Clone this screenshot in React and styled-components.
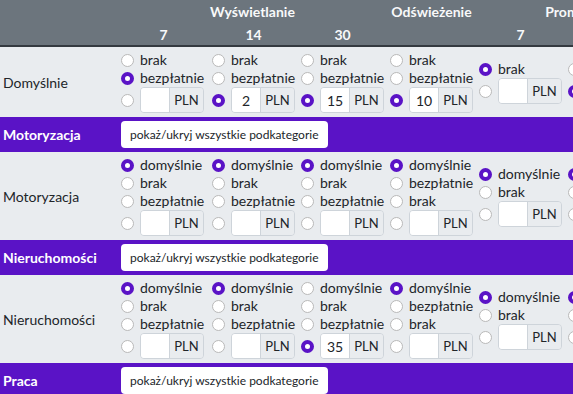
import styled, { createGlobalStyle } from "styled-components";

const GlobalStyle = createGlobalStyle`
  body {
    margin: 0;
    background: #fff;
    font-family: Lato, "Liberation Sans", sans-serif;
    color: #212529;
    overflow: hidden;
  }
`;

const COLS = "118px 91px 89px 89px 89px 89px 128px";
const PURPLE = "#5a13c6";

const Table = styled.div`
  width: 693px;
`;

const Head = styled.div`
  display: grid;
  grid-template-columns: ${COLS};
  grid-template-rows: 23px 22px;
  background: #6c757d;
  color: #f8f9fa;
  font-weight: 700;
  font-size: 14px;
  border-bottom: 2px solid #343a40;
`;

const Th = styled.div`
  grid-column: span ${(p) => p.$span || 1};
  display: flex;
  align-items: center;
  justify-content: center;
`;

const Row = styled.div`
  display: grid;
  grid-template-columns: ${COLS};
  background: #e9ecef;
`;

const Label = styled.div`
  display: flex;
  align-items: center;
  padding-left: 3px;
  font-size: 14px;
`;

const Cell = styled.div`
  display: flex;
  flex-direction: column;
  justify-content: center;
  padding: 4px 2px 4px 3px;
`;

const Option = styled.label`
  display: flex;
  align-items: center;
  gap: 6px;
  height: ${(p) => (p.$price ? "26px" : "18px")};
  font-size: 14px;
  line-height: 18px;
  white-space: nowrap;
`;

const Radio = styled.input.attrs({ type: "radio" })`
  appearance: none;
  margin: 0;
  width: 13px;
  height: 13px;
  flex: none;
  box-sizing: border-box;
  border-radius: 50%;
  background: #fff;
  border: 1px solid #b9b9b9;

  &:checked {
    border: 4px solid ${PURPLE};
  }
`;

const InputGroup = styled.div`
  display: flex;
  width: 64px;
  height: 26px;
  box-sizing: border-box;
  border: 1px solid #ced4da;
  border-radius: 4px;
  overflow: hidden;
`;

const Amount = styled.input`
  width: 28px;
  border: none;
  padding: 0;
  background: #fff;
  text-align: center;
  font: 14px Lato, "Liberation Sans", sans-serif;
  color: #212529;
  outline: none;
`;

const Addon = styled.span`
  flex: 1;
  display: flex;
  align-items: center;
  justify-content: center;
  background: #e9ecef;
  border-left: 1px solid #ced4da;
  font-size: 13px;
`;

const Band = styled.div`
  display: flex;
  align-items: center;
  height: 35px;
  background: ${PURPLE};
`;

const BandTitle = styled.div`
  width: 118px;
  box-sizing: border-box;
  padding-left: 3px;
  color: #fff;
  font-weight: 700;
  font-size: 14px;
`;

const ToggleButton = styled.button`
  margin-left: 3px;
  height: 27px;
  padding: 0 9px;
  border: none;
  border-radius: 4px;
  background: #fff;
  color: #212529;
  font: 12px Lato, "Liberation Sans", sans-serif;
`;

const LABELS = {
  def: "domyślnie",
  brak: "brak",
  free: "bezpłatnie",
};

const full = ["brak", "free", "price"];
const short = ["brak", "price"];
const withDef = ["def", "brak", "free", "price"];
const swapped = ["def", "free", "brak", "price"];
const defShort = ["def", "brak", "price"];

const sections = [
  {
    label: "Domyślnie",
    cells: [
      { opts: full, checked: "free" },
      { opts: full, checked: "price", value: "2" },
      { opts: full, checked: "price", value: "15" },
      { opts: full, checked: "price", value: "10" },
      { opts: short, checked: "brak" },
      { opts: short, checked: "price" },
    ],
  },
  {
    category: "Motoryzacja",
    label: "Motoryzacja",
    cells: [
      { opts: withDef, checked: "def" },
      { opts: withDef, checked: "def" },
      { opts: withDef, checked: "def" },
      { opts: swapped, checked: "def" },
      { opts: defShort, checked: "def" },
      { opts: defShort, checked: "def" },
    ],
  },
  {
    category: "Nieruchomości",
    label: "Nieruchomości",
    cells: [
      { opts: withDef, checked: "def" },
      { opts: withDef, checked: "def" },
      { opts: withDef, checked: "price", value: "35" },
      { opts: swapped, checked: "def" },
      { opts: defShort, checked: "def" },
      { opts: defShort, checked: "def" },
    ],
  },
  {
    category: "Praca",
    label: "Praca",
    cells: [
      { opts: withDef, checked: "def" },
      { opts: withDef, checked: "def" },
      { opts: withDef, checked: "def" },
      { opts: swapped, checked: "def" },
      { opts: defShort, checked: "def" },
      { opts: defShort, checked: "def" },
    ],
  },
];

const PriceCell = ({ name, cell }) => (
  <Cell>
    {cell.opts.map((o) =>
      o === "price" ? (
        <Option $price key={o}>
          <Radio name={name} defaultChecked={cell.checked === o} />
          <InputGroup>
            <Amount defaultValue={cell.value || ""} />
            <Addon>PLN</Addon>
          </InputGroup>
        </Option>
      ) : (
        <Option key={o}>
          <Radio name={name} defaultChecked={cell.checked === o} />
          {LABELS[o]}
        </Option>
      )
    )}
  </Cell>
);

export default function App() {
  return (
    <>
      <GlobalStyle />
      <Table>
        <Head>
          <Th />
          <Th $span={3}>Wyświetlanie</Th>
          <Th>Odświeżenie</Th>
          <Th $span={2}>Promowanie</Th>
          <Th />
          <Th>7</Th>
          <Th>14</Th>
          <Th>30</Th>
          <Th />
          <Th>7</Th>
          <Th>14</Th>
        </Head>
        {sections.map((s, i) => (
          <div key={i}>
            {s.category && (
              <Band>
                <BandTitle>{s.category}</BandTitle>
                <ToggleButton>pokaż/ukryj wszystkie podkategorie</ToggleButton>
              </Band>
            )}
            <Row>
              <Label>{s.label}</Label>
              {s.cells.map((c, j) => (
                <PriceCell key={j} name={`r${i}c${j}`} cell={c} />
              ))}
            </Row>
          </div>
        ))}
      </Table>
    </>
  );
}
